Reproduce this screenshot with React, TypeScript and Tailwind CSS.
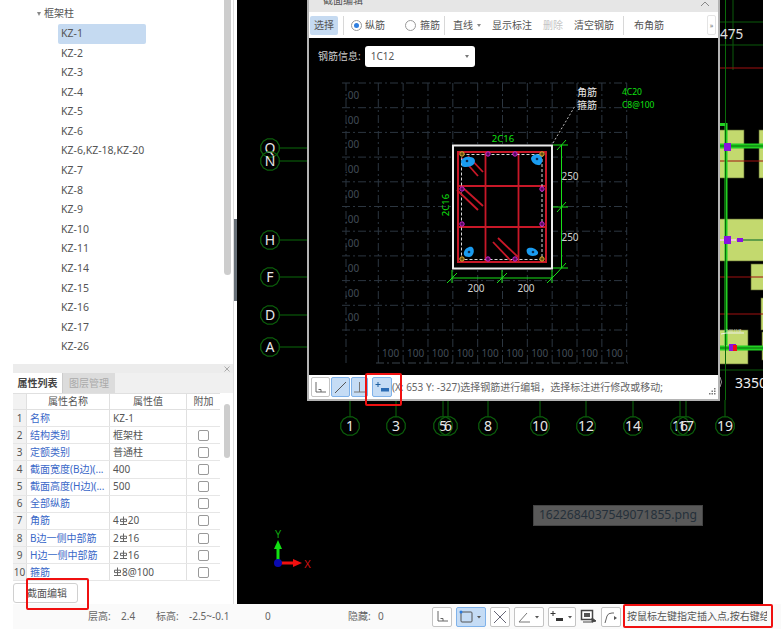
import type { ReactNode } from 'react'

const FONT = "font-['Noto_Sans','Noto_Sans_CJK_SC',sans-serif]"

const treeItems = [
  'KZ-1', 'KZ-2', 'KZ-3', 'KZ-4', 'KZ-5', 'KZ-6', 'KZ-6,KZ-18,KZ-20', 'KZ-7', 'KZ-8',
  'KZ-9', 'KZ-10', 'KZ-11', 'KZ-14', 'KZ-15', 'KZ-16', 'KZ-17', 'KZ-26',
]

// small steel grade symbol used in the rebar values
const Grade = () => (
  <svg width="9" height="10" viewBox="0 0 9 10" className="inline-block align-[2px]">
    <path d="M4.5 0.5V8.5M1 8.5H8M1.5 3.2H7.5V5.6H1.5Z" fill="none" stroke="#666" strokeWidth="1" />
  </svg>
)

const rows: { name: string; value: ReactNode; check: boolean }[] = [
  { name: '名称', value: 'KZ-1', check: false },
  { name: '结构类别', value: '框架柱', check: true },
  { name: '定额类别', value: '普通柱', check: true },
  { name: '截面宽度(B边)(...', value: '400', check: true },
  { name: '截面高度(H边)(...', value: '500', check: true },
  { name: '全部纵筋', value: '', check: true },
  { name: '角筋', value: <>4<Grade />20</>, check: true },
  { name: 'B边一侧中部筋', value: <>2<Grade />16</>, check: true },
  { name: 'H边一侧中部筋', value: <>2<Grade />16</>, check: true },
  { name: '箍筋', value: <><Grade />8@100</>, check: true },
]

function hexPoints(cx: number, cy: number, r: number) {
  const pts: string[] = []
  for (let i = 0; i < 12; i++) {
    const a = ((i * 30 + 15) * Math.PI) / 180
    pts.push(`${(cx + r * Math.cos(a)).toFixed(1)},${(cy + r * Math.sin(a)).toFixed(1)}`)
  }
  return pts.join(' ')
}

function AxisBubble({ x, y, label }: { x: number; y: number; label: string }) {
  return (
    <g>
      <polygon points={hexPoints(x, y, 9.5)} fill="none" stroke="#0b5f0b" strokeWidth="1.2" />
      <text x={x} y={y + 5} textAnchor="middle" fontSize="14" fill="#e6e6e6">{label}</text>
    </g>
  )
}

const sideAxes = [
  { y: 148, label: 'Q' }, { y: 161, label: 'N' }, { y: 240, label: 'H' },
  { y: 277, label: 'F' }, { y: 315, label: 'D' }, { y: 347, label: 'A' },
]
const bottomAxes = [
  { x: 350, label: '1' }, { x: 396, label: '3' }, { x: 443, label: '5' }, { x: 448, label: '6' },
  { x: 488, label: '8' }, { x: 540, label: '10' }, { x: 586, label: '12' }, { x: 633, label: '14' },
  { x: 680, label: '16' }, { x: 686, label: '17' }, { x: 725, label: '19' },
]

function CanvasDrawing() {
  return (
    <svg viewBox="237 0 526 604" width="526" height="604" className="block">
      {/* blocks */}
      <g fill="#c3d96e" stroke="#55602c" strokeWidth="0.6">
        <rect x="718" y="130" width="26" height="48" />
        <rect x="759" y="130" width="10" height="48" />
        <rect x="718" y="219" width="50" height="42" />
        <rect x="751" y="264" width="20" height="26" />
        <rect x="761" y="298" width="10" height="32" />
        <rect x="718" y="330" width="30" height="34" />
        <rect x="762" y="332" width="10" height="28" />
      </g>
      {/* grid lines */}
      <g stroke="#0a5a0a" strokeWidth="1" fill="none">
        <path d="M719 22H763M719 45H763M719 370H763" />
        <path d="M733 0V70" />
      </g>
      <g stroke="#a01010" strokeWidth="1">
        <path d="M719 68H763M719 161H763M719 277H763M719 314H763" />
      </g>
      <path d="M720 124.5H726V345" stroke="#22d022" strokeWidth="3" fill="none" />
      <path d="M720 146H763M720 348H763" stroke="#22d022" strokeWidth="5" />
      <path d="M725.500 0V400M720 146H763M720 348H763" stroke="#0a6a0a" strokeWidth="1" />
      <path d="M738 240H763" stroke="#3f8a3f" strokeWidth="1.500" />
      <path d="M720 240H736" stroke="#f0c8d8" strokeWidth="2" />
      <rect x="724" y="143" width="7" height="8" fill="#8a10e0" />
      <rect x="724" y="236" width="7" height="8" fill="#8a10e0" />
      <rect x="737" y="238" width="6" height="4" fill="#8a10e0" />
      <rect x="729" y="344" width="7" height="7" fill="#8a10e0" />
      <rect x="733" y="345" width="4" height="6" fill="#f01010" />
      <path d="M721 334L726 333H744" stroke="#f0f0f0" strokeWidth="1" fill="none" />
      <text x="726" y="332" fontSize="3.500" fill="#ddd">0.00 11/8</text>

      {/* axis leaders */}
      <g stroke="#0a6a0a" strokeWidth="1">
        {sideAxes.map((a) => <path key={a.label} d={`M279 ${a.y}H307`} />)}
        {bottomAxes.map((a) => <path key={a.label} d={`M${a.x} 400V417`} />)}
      </g>
      {sideAxes.map((a) => <AxisBubble key={a.label} x={270} y={a.y} label={a.label} />)}
      {bottomAxes.map((a) => <AxisBubble key={a.label} x={a.x} y={426} label={a.label} />)}

      <path d="M720 377Q723 382 720 387" stroke="#999" fill="none" />
      <text x="720" y="39" fontSize="13.500" fill="#e0e0e0">475</text>
      <text x="735" y="388" fontSize="14" fill="#f0f0f0">3350</text>

      {/* ucs */}
      <path d="M278 563V549" stroke="#12e012" strokeWidth="3" />
      <path d="M278 540L282 549H274Z" fill="#12e012" />
      <path d="M278 563H293" stroke="#f01010" strokeWidth="3" />
      <path d="M302 563L293 559V567Z" fill="#f01010" />
      <circle cx="278" cy="563" r="4" fill="#0a0ab0" />
      <text x="278" y="538" textAnchor="middle" fontSize="11" fill="#0fa00f">Y</text>
      <text x="307.500" y="568" textAnchor="middle" fontSize="11" fill="#d01010">X</text>
    </svg>
  )
}

const gridXs = Array.from({ length: 11 }, (_, i) => 378.3 + i * 24.84)
const gridYs = Array.from({ length: 11 }, (_, i) => 83 + i * 24.7)
const hooks = [
  'M461 162C461 158 467 156 470 157C475 157 476 161 474 164C472 167 464 168 462 166Z',
  'M531 158C533 153 541 153 542 158C543 162 541 166 538 165C535 165 531 162 531 158Z',
  'M464 252C465 248 471 245 473 248C475 251 473 257 469 257C466 257 463 256 464 252Z',
  'M527 249C530 246 537 249 538 252C539 256 532 257 529 255C527 254 526 251 527 249Z',
]
const hookHoles = [[467, 161], [537, 159], [469, 252], [533, 252]]
const diagonals = [
  [468, 156, 483, 172], [462, 158, 478, 176], [462, 187, 483, 206], [457, 190, 478, 210],
  [498, 238, 518, 257], [493, 242, 512, 262],
]
const midBars = [[488, 154], [515, 154], [542, 189], [542, 224], [462, 189], [462, 224], [488, 259], [515, 259]]
const cornerBars = [[462, 154], [542, 154], [462, 259], [542, 259]]

function SectionDrawing() {
  return (
    <svg viewBox="309 76 409 299" width="409" height="299" className="block">
      {/* background grid */}
      <g stroke="#2c3640" strokeWidth="1" strokeDasharray="8 3 2 3" fill="none">
        {[346, ...gridXs].map((x) => <path key={x} d={`M${x} 83V363`} />)}
        {gridYs.map((y) => <path key={y} d={`M342 ${y}H628`} />)}
        <path d="M376 363H628" stroke="#3a444d" />
      </g>
      <g fontSize="10" fill="#414c56">
        {gridYs.slice(0, 10).map((y) => <text key={y} x="345" y={y + 16}>.00</text>)}
        {gridXs.slice(0, 10).map((x) => <text key={x} x={x + 12.4} y="357" textAnchor="middle">100</text>)}
      </g>

      <path d="M553 143L575 106" stroke="#bbb" strokeWidth="1" strokeDasharray="2 2" />
      <g fontSize="10" fill="#e8e8e8">
        <text x="577" y="96">角筋</text>
        <text x="577" y="109">箍筋</text>
      </g>
      <g fontSize="8.500" fill="#10e010">
        <text x="622" y="95">4C20</text>
        <text x="622" y="108">C8@100</text>
      </g>

      {/* dimensions */}
      <g stroke="#18e018" strokeWidth="1" fill="none">
        <path d="M561.500 145V268M553 145H568M553 207H568M553 268H568" />
        <path d="M452 278H552M452 270V283M502 270V283M552 270V283" />
        <path d="M557 150L566 140M557 212L566 202M557 273L566 263M447 283L457 273M497 283L507 273M547 283L557 273" />
      </g>
      <g fontSize="10" fill="#d0d0d0" textAnchor="middle">
        <text x="570" y="180">250</text>
        <text x="570" y="241">250</text>
        <text x="476" y="292">200</text>
        <text x="526" y="292">200</text>
      </g>
      <g fontSize="9.500" fill="#10e010" textAnchor="middle">
        <text x="503" y="142">2C16</text>
        <text transform="translate(449 205) rotate(-90)">2C16</text>
      </g>

      {/* section */}
      <rect x="453" y="145.500" width="99" height="123" fill="#000" stroke="#ececec" strokeWidth="2" />
      <rect x="458" y="152" width="88" height="110" fill="none" stroke="#c81828" strokeWidth="2" />
      <path d="M485.500 152V262M518.500 152V262M458 186H546M458 227H546" stroke="#c81828" strokeWidth="1.800" />
      <rect x="461.500" y="154.500" width="80.500" height="105" fill="none" stroke="#f0f0f0" strokeWidth="0.900" strokeDasharray="3 2" />
      <g stroke="#c81828" strokeWidth="1.800">
        {diagonals.map((d) => <line key={d.join()} x1={d[0]} y1={d[1]} x2={d[2]} y2={d[3]} />)}
      </g>
      <g fill="#1a9cf0">{hooks.map((d) => <path key={d} d={d} />)}</g>
      <g fill="#0a2a50">{hookHoles.map((h) => <circle key={h.join()} cx={h[0]} cy={h[1]} r="1.300" />)}</g>
      <g fill="#50105a" stroke="#d020d0" strokeWidth="1">
        {midBars.map((b) => <circle key={b.join()} cx={b[0]} cy={b[1]} r="2.200" />)}
      </g>
      <g fill="#604a10" stroke="#e0b030" strokeWidth="1">
        {cornerBars.map((b) => <circle key={b.join()} cx={b[0]} cy={b[1]} r="2.200" />)}
      </g>
    </svg>
  )
}

function Divider({ className }: { className: string }) {
  return <div className={`w-px h-[19px] bg-[#d8d8d8] ${className}`} />
}

function DialogToolbar() {
  return (
    <div className="flex items-center h-[26px] bg-white text-[10px] text-[#555] leading-none">
      <div className="ml-[1px] w-[28px] h-[19px] rounded-[2px] bg-[#c5daf1] flex items-center justify-center">选择</div>
      <Divider className="ml-[5px]" />
      <div className="ml-[7px] w-[11px] h-[11px] rounded-full border border-[#999] flex items-center justify-center">
        <div className="w-[5px] h-[5px] rounded-full bg-[#2f7fe0]" />
      </div>
      <span className="ml-[3px] w-[20px]">纵筋</span>
      <div className="ml-[20px] w-[11px] h-[11px] rounded-full border border-[#999]" />
      <span className="ml-[4px] w-[20px]">箍筋</span>
      <Divider className="ml-[4px]" />
      <span className="ml-[8px] w-[20px]">直线</span>
      <div className="ml-[4px] w-0 h-0 border-x-[2px] border-x-transparent border-t-[3px] border-t-[#888]" />
      <span className="ml-[11px] w-[40px]">显示标注</span>
      <span className="ml-[11px] w-[20px] text-[#c4c4c4]">删除</span>
      <span className="ml-[11px] w-[40px]">清空钢筋</span>
      <Divider className="ml-[9px]" />
      <span className="ml-[10px] w-[30px]">布角筋</span>
      <div className="ml-auto mr-[2px] w-[9px] h-[20px] rounded-[2px] border border-[#e4e4e4] flex items-center justify-center text-[7px] text-[#777]">»</div>
    </div>
  )
}

function MiniButton({ active, width, children }: { active?: boolean; width: string; children: ReactNode }) {
  return (
    <div className={`h-[20px] ${width} rounded-[2px] border flex items-center justify-center ${active ? 'bg-[#c5dcf5] border-[#7fb2ea]' : 'bg-white border-[#c4c4c4]'}`}>
      {children}
    </div>
  )
}

const CornerIcon = () => (
  <svg width="13" height="13" viewBox="0 0 13 13"><path d="M2 1V11H12M4.500 8.500H7V11" fill="none" stroke="#666" /></svg>
)
const SnapIcon = () => (
  <svg width="16" height="12" viewBox="0 0 16 12">
    <path d="M4 1V6M1.500 3.500H6.500" stroke="#2060a0" fill="none" />
    <rect x="7" y="7" width="8" height="3.500" fill="#2b6cb5" />
  </svg>
)

function Dialog() {
  return (
    <div className="absolute left-[70px] top-0 w-[413px] h-[401px] border-2 border-t-0 border-[#b4b4b4] flex flex-col">
      <div className="h-[12px] bg-[#e6e6e6] overflow-hidden flex items-end justify-between pb-[5px] pl-[14px] pr-[8px] text-[10px] text-[#555] leading-[14px]">
        <span>截面编辑</span>
        <svg width="10" height="6" viewBox="0 0 10 6"><path d="M1 5L5 1L9 5" fill="none" stroke="#888" /></svg>
      </div>
      <DialogToolbar />
      <div className="flex flex-col h-[337px] bg-black">
        <div className="h-[38px] flex items-start pl-[9px] pt-[8px]">
          <span className="text-[10px] text-[#cccccc] leading-[21px]">钢筋信息:</span>
          <div className="ml-[4px] w-[110px] h-[21px] bg-white rounded-[3px] flex items-center justify-between px-[6px] text-[10px] text-[#555]">
            <span>1C12</span>
            <div className="w-0 h-0 border-x-[2px] border-x-transparent border-t-[3px] border-t-[#777]" />
          </div>
        </div>
        <SectionDrawing />
      </div>
      <div className="h-[24px] bg-white flex items-center pl-[2px] text-[10px] text-[#666] whitespace-nowrap">
        <div className="flex items-center gap-[1px]">
          <MiniButton width="w-[19px]"><CornerIcon /></MiniButton>
          <MiniButton active width="w-[19px]">
            <svg width="13" height="13" viewBox="0 0 13 13"><path d="M1 12L12 1" stroke="#555" /></svg>
          </MiniButton>
          <MiniButton active width="w-[17px]">
            <svg width="13" height="13" viewBox="0 0 13 13"><path d="M1 11H12M6.500 1V11" stroke="#777" fill="none" /></svg>
          </MiniButton>
          <div className="ml-[3px]"><MiniButton active width="w-[20px]"><SnapIcon /></MiniButton></div>
        </div>
        <span>(X: 653 Y: -327)选择钢筋进行编辑，选择标注进行修改或移动;</span>
        <svg width="7" height="7" viewBox="0 0 7 7" className="ml-auto mr-[2px] mt-[8px]" fill="#777">
          <rect x="5" y="0" width="1.500" height="1.500" /><rect x="2.500" y="2.500" width="1.500" height="1.500" />
          <rect x="5" y="2.500" width="1.500" height="1.500" /><rect x="0" y="5" width="1.500" height="1.500" />
          <rect x="2.500" y="5" width="1.500" height="1.500" /><rect x="5" y="5" width="1.500" height="1.500" />
        </svg>
      </div>
    </div>
  )
}

function Tree() {
  return (
    <div className="h-[364px] flex">
      <div className="w-[224px] text-[10px] text-[#555] overflow-hidden">
        <div className="h-[24px] flex items-center pl-[37px] pt-[3px]">
          <div className="w-0 h-0 border-x-[2.500px] border-x-transparent border-t-[4px] border-t-[#888]" />
          <span className="ml-[3px]">框架柱</span>
        </div>
        <div className="ml-[58px] text-[10.500px]">
          {treeItems.map((item, i) => (
            <div key={item} className={`h-[19.6px] flex items-center pl-[3px] whitespace-nowrap rounded-[2px] ${i === 0 ? 'w-[88px] bg-[#c5daf1]' : ''}`}>
              {item}
            </div>
          ))}
        </div>
      </div>
      <div className="w-[7px] h-[275px] bg-[#cdcdcd] rounded-b-[4px]" />
    </div>
  )
}

function PropertyPanel() {
  return (
    <div className="ml-[13px] w-[220px] text-[10px] text-[#555]">
      <div className="h-[9px] bg-[#ececec] flex items-center justify-end pr-[3px]">
        <svg width="6" height="6" viewBox="0 0 6 6"><path d="M0.500 0.500L5.500 5.500M5.500 0.500L0.500 5.500" stroke="#aaa" /></svg>
      </div>
      <div className="h-[20px] bg-[#f0f0f0] flex items-stretch">
        <div className="w-[49px] bg-white flex items-center justify-center font-bold text-[#444]">属性列表</div>
        <div className="w-[53px] bg-[#dcdcdc] flex items-center justify-center text-[#aaa] border-l border-[#ccc]">图层管理</div>
      </div>
      <div className="flex">
        <div className="w-[207px]">
          <div className="grid grid-cols-[13px_83px_77px_34px] h-[17px] border-y border-[#e0e0e0] text-center leading-[15px]">
            <div className="bg-[#f2f2f2]" />
            <div className="border-l border-[#e0e0e0]">属性名称</div>
            <div className="border-l border-[#e0e0e0]">属性值</div>
            <div className="border-l border-[#e0e0e0]">附加</div>
          </div>
          {rows.map((row, i) => (
            <div key={row.name} className="grid grid-cols-[13px_83px_77px_34px] h-[17.15px] border-b border-[#e6e6e6] items-center whitespace-nowrap">
              <div className="h-full bg-[#f2f2f2] flex items-center justify-center">{i + 1}</div>
              <div className="h-full border-l border-[#e0e0e0] pl-[3px] flex items-center text-[#3a68c8]">{row.name}</div>
              <div className="h-full border-l border-[#e0e0e0] pl-[3px] flex items-center">{row.value}</div>
              <div className="h-full border-l border-[#e0e0e0] flex items-center justify-center">
                {row.check && <div className="w-[11px] h-[11px] border border-[#999] rounded-[2px] bg-white" />}
              </div>
            </div>
          ))}
        </div>
        <div className="ml-[4px] mt-[11px] w-[6px] h-[54px] rounded-[3px] bg-[#cdcdcd]" />
      </div>
      <div className="mt-[2px] w-[65px] h-[20px] rounded-[3px] border border-[#d0d0d0] bg-white flex items-center pl-[13px]">截面编辑</div>
    </div>
  )
}

function StatusBar() {
  return (
    <div className="h-[25px] flex items-center bg-white text-[10px] text-[#666] whitespace-nowrap">
      <div className="w-[13px]" />
      <div className="flex items-center flex-1 h-full bg-[#fafafa]">
        <span className="ml-[75px] w-[33px]">层高:</span>
        <span className="w-[35px]">2.4</span>
        <span className="w-[33px]">标高:</span>
        <span className="w-[76px]">-2.5~-0.1</span>
        <span className="w-[83px]">0</span>
        <span className="w-[30px]">隐藏:</span>
        <span className="w-[54px]">0</span>
        <div className="flex items-center gap-[4px]">
          <MiniButton width="w-[20px]"><CornerIcon /></MiniButton>
          <MiniButton active width="w-[30px]">
            <svg width="24" height="14" viewBox="0 0 24 14">
              <rect x="2" y="2" width="11" height="10" rx="1" fill="none" stroke="#555" />
              <circle cx="2" cy="2" r="1.500" fill="#2b7ce0" />
              <path d="M18 6H22L20 8.500Z" fill="#555" />
            </svg>
          </MiniButton>
          <MiniButton width="w-[20px]">
            <svg width="14" height="14" viewBox="0 0 14 14"><path d="M1 1L13 13M13 1L1 13" stroke="#667" /></svg>
          </MiniButton>
          <MiniButton width="w-[30px]">
            <svg width="24" height="14" viewBox="0 0 24 14">
              <path d="M2 12H13M2 12L10 3" stroke="#777" fill="none" />
              <path d="M18 6H22L20 8.500Z" fill="#555" />
            </svg>
          </MiniButton>
          <MiniButton width="w-[28px]">
            <svg width="24" height="14" viewBox="0 0 24 14">
              <path d="M3 1V6M0.500 3.500H5.500" stroke="#333" fill="none" />
              <rect x="6" y="8" width="7" height="3" fill="#333" />
              <path d="M18 6H22L20 8.500Z" fill="#555" />
            </svg>
          </MiniButton>
          <svg width="17" height="16" viewBox="0 0 17 16">
            <rect x="1.500" y="1.500" width="11" height="9" fill="#fff" stroke="#444" strokeWidth="1.500" />
            <rect x="4" y="4" width="6" height="4" fill="#555" />
            <path d="M3 13H13M12 9L16 12L12 13Z" fill="#444" stroke="#444" />
          </svg>
          <MiniButton width="w-[20px]">
            <svg width="14" height="14" viewBox="0 0 14 14">
              <path d="M1 13L3 6Q4 3 8 3H10" fill="none" stroke="#666" />
              <path d="M10 6L13 8L10 10Z" fill="#555" />
            </svg>
          </MiniButton>
        </div>
        <span className="ml-[6px] w-[140px] overflow-hidden text-[#555]">按鼠标左键指定插入点,按右键结束</span>
      </div>
    </div>
  )
}

export default function App() {
  return (
    <div className={`relative w-[781px] h-[629px] overflow-hidden bg-white ${FONT}`}>
      <div className="flex h-[604px]">
        <div className="w-[233px] border-r border-[#dddddd] box-content">
          <Tree />
          <PropertyPanel />
        </div>
        <div className="w-[3px] pt-[219px]">
          <div className="h-[82px] bg-[#687078]" />
        </div>
        <div className="relative w-[526px] h-[604px] bg-black overflow-hidden">
          <CanvasDrawing />
          <Dialog />
          <div className="absolute left-[296px] top-[505px] w-[170px] h-[21px] bg-[#595959] border border-[#444] flex items-center justify-center text-[12.200px] text-[#25303a]">
            1622684037549071855.png
          </div>
        </div>
      </div>
      <StatusBar />

      {/* red annotations on top of the screenshot */}
      <div className="absolute left-[26px] top-[578px] w-[63px] h-[32px] border-2 border-[#f01010] rounded-[2px]" />
      <div className="absolute left-[365px] top-[373px] w-[37px] h-[33px] border-2 border-[#f01010] rounded-[2px]" />
      <div className="absolute left-[623px] top-[604px] w-[150px] h-[24px] border-2 border-[#f01010] rounded-[2px]" />
    </div>
  )
}
